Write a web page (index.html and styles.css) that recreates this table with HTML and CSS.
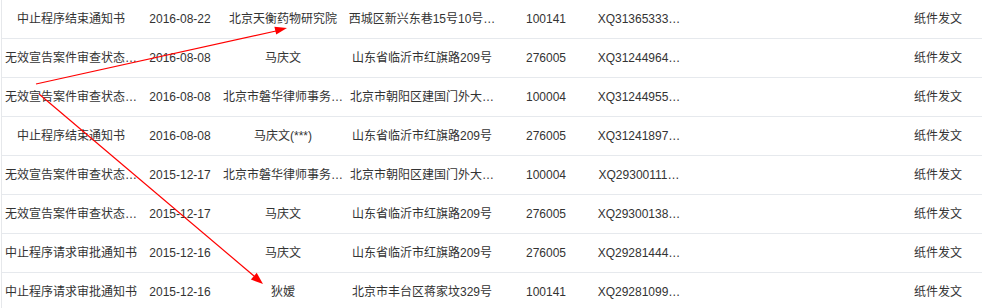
FILE: index.html
```html
<!DOCTYPE html>
<html lang="zh">
<head>
<meta charset="utf-8">
<title>发文列表</title>
<link rel="stylesheet" href="styles.css">
</head>
<body>
<div class="page">
  <div class="list">
    <div class="row">
      <div class="c">中止程序结束通知书</div><div class="c">2016-08-22</div><div class="c">北京天衡药物研究院</div><div class="c">西城区新兴东巷15号10号…</div><div class="c">100141</div><div class="c">XQ31365333…</div><div class="c"></div><div class="c">纸件发文</div>
    </div>
    <div class="row">
      <div class="c">无效宣告案件审查状态…</div><div class="c">2016-08-08</div><div class="c">马庆文</div><div class="c">山东省临沂市红旗路209号</div><div class="c">276005</div><div class="c">XQ31244964…</div><div class="c"></div><div class="c">纸件发文</div>
    </div>
    <div class="row">
      <div class="c">无效宣告案件审查状态…</div><div class="c">2016-08-08</div><div class="c">北京市磐华律师事务…</div><div class="c">北京市朝阳区建国门外大…</div><div class="c">100004</div><div class="c">XQ31244955…</div><div class="c"></div><div class="c">纸件发文</div>
    </div>
    <div class="row">
      <div class="c">中止程序结束通知书</div><div class="c">2016-08-08</div><div class="c">马庆文(***)</div><div class="c">山东省临沂市红旗路209号</div><div class="c">276005</div><div class="c">XQ31241897…</div><div class="c"></div><div class="c">纸件发文</div>
    </div>
    <div class="row">
      <div class="c">无效宣告案件审查状态…</div><div class="c">2015-12-17</div><div class="c">北京市磐华律师事务…</div><div class="c">北京市朝阳区建国门外大…</div><div class="c">100004</div><div class="c">XQ29300111…</div><div class="c"></div><div class="c">纸件发文</div>
    </div>
    <div class="row">
      <div class="c">无效宣告案件审查状态…</div><div class="c">2015-12-17</div><div class="c">马庆文</div><div class="c">山东省临沂市红旗路209号</div><div class="c">276005</div><div class="c">XQ29300138…</div><div class="c"></div><div class="c">纸件发文</div>
    </div>
    <div class="row">
      <div class="c">中止程序请求审批通知书</div><div class="c">2015-12-16</div><div class="c">马庆文</div><div class="c">山东省临沂市红旗路209号</div><div class="c">276005</div><div class="c">XQ29281444…</div><div class="c"></div><div class="c">纸件发文</div>
    </div>
    <div class="row">
      <div class="c">中止程序请求审批通知书</div><div class="c">2015-12-16</div><div class="c">狄嫒</div><div class="c">北京市丰台区蒋家坟329号</div><div class="c">100141</div><div class="c">XQ29281099…</div><div class="c"></div><div class="c">纸件发文</div>
    </div>
  </div>
  <svg class="arrows" width="982" height="308" viewBox="0 0 982 308" xmlns="http://www.w3.org/2000/svg">
    <line x1="36" y1="84" x2="276" y2="31" stroke="#ff0000" stroke-width="1.2"/>
    <polygon points="287,28 276.2,34.5 274.4,26.7" fill="#ff0000"/>
    <line x1="39" y1="94" x2="254" y2="276" stroke="#ff0000" stroke-width="1.2"/>
    <polygon points="263,284 250.9,279.6 256.7,272.8" fill="#ff0000"/>
  </svg>
</div>
</body>
</html>
```

FILE: styles.css
```css
html, body {
  margin: 0;
  padding: 0;
  background: #ffffff;
}

.page {
  position: relative;
  width: 982px;
  height: 308px;
  overflow: hidden;
}

.list {
  margin-left: 1px;
  border-left: 1px solid #e6e8eb;
  font-family: "Liberation Sans", "Noto Sans CJK SC", sans-serif;
  font-size: 12px;
  color: #333333;
}

.row {
  display: grid;
  grid-template-columns: 138px 80px 126px 152px 96px 90px 1fr 88px;
  height: 38px;
  border-bottom: 1px solid #e6e9ed;
}

.c {
  padding: 0 2px;
  min-width: 0;
  line-height: 38px;
  text-align: center;
  white-space: nowrap;
}

.arrows {
  position: absolute;
  left: 0;
  top: 0;
  pointer-events: none;
}
```
